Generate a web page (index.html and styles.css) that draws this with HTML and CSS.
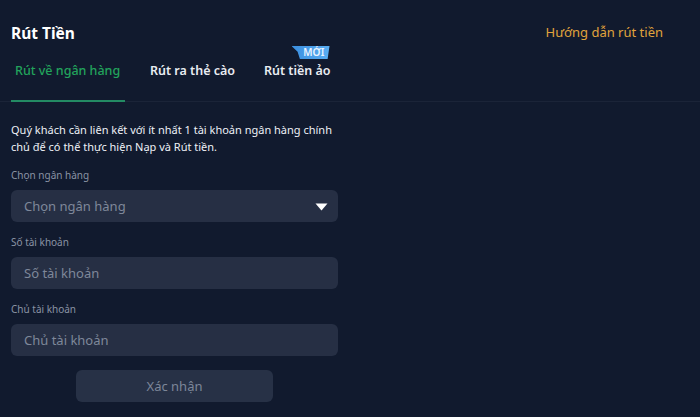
FILE: index.html
```html
<!DOCTYPE html>
<html lang="vi">
<head>
<meta charset="utf-8">
<link rel="stylesheet" href="styles.css">
</head>
<body>
<div class="page">
  <header class="head">
    <h1 class="title">Rút Tiền</h1>
    <a class="guide">Hướng dẫn rút tiền</a>
  </header>
  <nav class="tabs">
    <div class="tab active">Rút về ngân hàng</div>
    <div class="tab">Rút ra thẻ cào</div>
    <div class="tab">Rút tiền ảo<span class="badge">MỚI</span></div>
  </nav>
  <main class="form">
    <p class="note">Quý khách cần liên kết với ít nhất 1 tài khoản ngân hàng chính chủ để có thể thực hiện Nạp và Rút tiền.</p>
    <div class="field">
      <label class="label">Chọn ngân hàng</label>
      <div class="input select"><span>Chọn ngân hàng</span><svg class="caret" width="13" height="8" viewBox="0 0 13 8"><path d="M0.5 0.5h12l-6 7z" fill="#fff"/></svg></div>
    </div>
    <div class="field">
      <label class="label">Số tài khoản</label>
      <div class="input"><span>Số tài khoản</span></div>
    </div>
    <div class="field">
      <label class="label">Chủ tài khoản</label>
      <div class="input"><span>Chủ tài khoản</span></div>
    </div>
    <div class="actions"><button class="submit">Xác nhận</button></div>
  </main>
</div>
</body>
</html>
```
FILE: styles.css
```css
* { box-sizing: border-box; }
html, body { margin: 0; height: 100%; }
body {
  background: #111a2e;
  font-family: "Noto Sans", "Open Sans", sans-serif;
  color: #fff;
  overflow: hidden;
}
.page { width: 700px; height: 417px; }
.head {
  display: flex;
  justify-content: space-between;
  align-items: center;
  padding: 22px 37px 0 11px;
  height: 44px;
}
.title { margin: 0; font-size: 15.5px; font-weight: 700; line-height: 20px; }
.guide { color: #e0a43c; font-size: 13px; line-height: 18px; margin-top: -2px; }
.tabs {
  display: flex;
  padding-left: 11px;
  border-bottom: 1px solid #1b2438;
  height: 58px;
}
.tab {
  position: relative;
  font-size: 12.5px;
  font-weight: 600;
  color: #e9ecf2;
  padding: 18px 0 0;
  margin-right: 29px;
  line-height: 18px;
}
.tab:first-child { width: 114px; padding-left: 4px; margin-right: 25px; }
.tab.active { color: #22a35c; font-weight: 500; border-bottom: 2px solid #238a63; margin-bottom: -1px; }
.badge {
  position: absolute;
  top: 2px;
  right: 1px;
  width: 38px;
  font-size: 10px;
  font-weight: 600;
  line-height: 13px;
  padding: 0 5px 0 0;
  text-align: right;
  color: #eaf4ff;
  background: linear-gradient(90deg, #3b8fe0, #5aaef2);
  clip-path: polygon(0 0, 100% 0, 95% 100%, 22% 100%, 16% 45%);
}
.form { padding: 19px 0 0 11px; width: 338px; }
.note {
  margin: 0 -12px 13px 0;
  font-size: 11px;
  line-height: 17px;
  color: #eef1f6;
}
.field { margin-bottom: 13px; }
.label { display: block; font-size: 10px; color: #8a93a4; line-height: 14px; margin-bottom: 8px; }
.input {
  height: 32px;
  background: #262f44;
  border-radius: 6px;
  display: flex;
  align-items: center;
  justify-content: space-between;
  padding: 0 10px 0 13px;
  font-size: 13px;
  color: #7f889a;
}
.caret { margin-top: 1px; }
.actions { display: flex; padding-left: 65px; margin-top: 14px; }
.submit {
  width: 197px;
  height: 32px;
  border: 0;
  border-radius: 6px;
  background: #273146;
  color: #7d8699;
  font: 13px "Noto Sans", sans-serif;
}
```
